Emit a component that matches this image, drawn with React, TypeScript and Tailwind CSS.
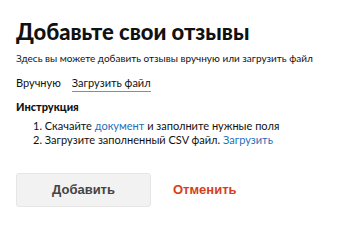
export default function App() {
  return (
    <div className="w-[349px] h-[217px] bg-white px-4 pt-[19px] text-[#111]" style={{ fontFamily: 'Lato, "Open Sans", sans-serif' }}>
      <h1 className="text-[22px] leading-[26px] font-black">Добавьте свои отзывы</h1>
      <p className="mt-[7px] text-[10px] leading-[12px]">
        Здесь вы можете добавить отзывы вручную или загрузить файл
      </p>
      <div className="mt-[11px] flex gap-[11px] text-[11px] leading-[16px]">
        <span>Вручную</span>
        <span className="border-b-[1.5px] border-[#e8731c]">Загрузить файл</span>
      </div>
      <h2 className="mt-[8px] text-[11px] leading-[14px] font-black">Инструкция</h2>
      <ol className="mt-[5px] pl-[17px] text-[11px] leading-[14px] list-none">
        <li>
          1. Скачайте <a className="text-[#1f6fb8]">документ</a> и заполните нужные поля
        </li>
        <li>
          2. Загрузите заполненный CSV файл. <a className="text-[#1f6fb8]">Загрузить</a>
        </li>
      </ol>
      <div className="mt-[26px] flex items-center gap-[22px]">
        <button className="w-[135px] h-[34px] rounded-[3px] bg-[#f2f2f2] border border-[#e6e6e6] text-[13px] font-bold text-[#444]" style={{ fontFamily: '"Liberation Sans", sans-serif' }}>
          Добавить
        </button>
        <button className="text-[13px] font-bold text-[#d6401e]" style={{ fontFamily: '"Liberation Sans", sans-serif' }}>
          Отменить
        </button>
      </div>
    </div>
  )
}
